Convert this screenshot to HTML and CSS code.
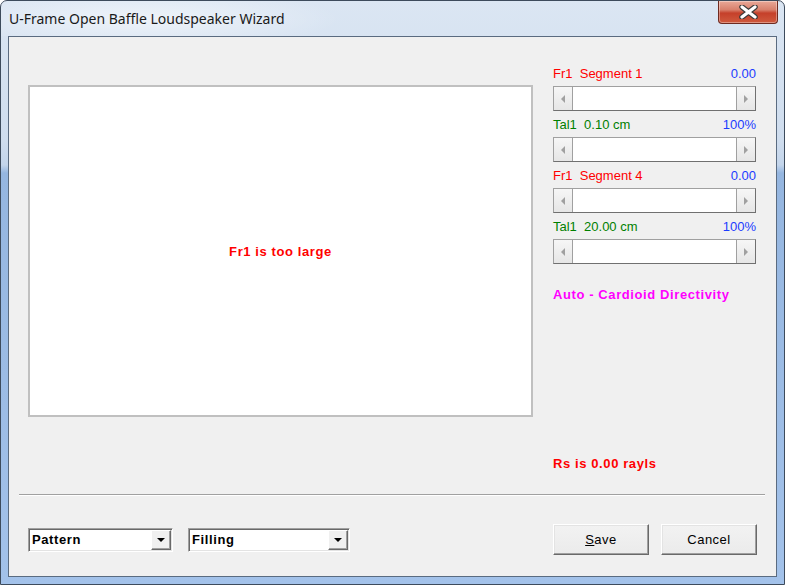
FILE: index.html
```html
<!DOCTYPE html>
<html lang="en">
<head>
    <meta charset="UTF-8">
    <title>U-Frame Open Baffle Loudspeaker Wizard</title>
    <link rel="stylesheet" href="styles.css">
</head>
<body>
    <div class="window">
        <div class="titlebar">
            <span class="title">U-Frame Open Baffle Loudspeaker Wizard</span>
            <div class="close-btn">
                <svg width="19" height="14" viewBox="0 0 19 14">
                    <path d="M3 2 L16 12 M16 2 L3 12" stroke="#3a3a3a" stroke-width="5.5" stroke-linecap="round"/>
                    <path d="M3 2 L16 12 M16 2 L3 12" stroke="#ffffff" stroke-width="3.2" stroke-linecap="round"/>
                </svg>
            </div>
        </div>

        <div class="client">
            <div class="main">
                <!-- plot area -->
                <div class="plot">
                    <span class="plot-msg">Fr1 is too large</span>
                </div>

                <!-- sliders -->
                <div class="panel">
                    <div class="slider-group">
                        <div class="slider-label"><span class="red">Fr1&nbsp; Segment 1</span><span class="blue">0.00</span></div>
                        <div class="scrollbar">
                            <div class="sb-btn left"><i class="arrow-left"></i></div>
                            <div class="sb-track"></div>
                            <div class="sb-btn right"><i class="arrow-right"></i></div>
                        </div>
                    </div>
                    <div class="slider-group">
                        <div class="slider-label"><span class="green">Tal1&nbsp; 0.10 cm</span><span class="blue">100%</span></div>
                        <div class="scrollbar">
                            <div class="sb-btn left"><i class="arrow-left"></i></div>
                            <div class="sb-track"></div>
                            <div class="sb-btn right"><i class="arrow-right"></i></div>
                        </div>
                    </div>
                    <div class="slider-group">
                        <div class="slider-label"><span class="red">Fr1&nbsp; Segment 4</span><span class="blue">0.00</span></div>
                        <div class="scrollbar">
                            <div class="sb-btn left"><i class="arrow-left"></i></div>
                            <div class="sb-track"></div>
                            <div class="sb-btn right"><i class="arrow-right"></i></div>
                        </div>
                    </div>
                    <div class="slider-group">
                        <div class="slider-label"><span class="green">Tal1&nbsp; 20.00 cm</span><span class="blue">100%</span></div>
                        <div class="scrollbar">
                            <div class="sb-btn left"><i class="arrow-left"></i></div>
                            <div class="sb-track"></div>
                            <div class="sb-btn right"><i class="arrow-right"></i></div>
                        </div>
                    </div>

                    <div class="mode">Auto - Cardioid Directivity</div>
                    <div class="rs">Rs is 0.00 rayls</div>
                </div>
            </div>

            <div class="separator"></div>

            <div class="footer">
                <div class="combos">
                    <div class="combo combo-pattern">
                        <span class="combo-text">Pattern</span>
                        <span class="combo-arrow"><i class="arrow-down"></i></span>
                    </div>
                    <div class="combo combo-filling">
                        <span class="combo-text">Filling</span>
                        <span class="combo-arrow"><i class="arrow-down"></i></span>
                    </div>
                </div>
                <div class="buttons">
                    <button class="btn"><u>S</u>ave</button>
                    <button class="btn">Cancel</button>
                </div>
            </div>
        </div>
    </div>
</body>
</html>
```

FILE: styles.css
```css
* {
    box-sizing: border-box;
}

body {
    margin: 0;
    background: #ffffff;
    font-family: "Liberation Sans", Arial, sans-serif;
}

.window {
    width: 785px;
    height: 585px;
    display: flex;
    flex-direction: column;
    padding: 0 7px 7px;
    border: 1px solid #3d4b5c;
    border-radius: 7px 7px 0 0;
    background: linear-gradient(180deg, #dbe6f3 0px, #cfddee 140px, #c3d5eb 164px, #95b6e0 172px, #a3c2ea 100%);
}

.titlebar {
    height: 35px;
    margin: 0 -7px;
    display: flex;
    align-items: flex-start;
    background: radial-gradient(ellipse 200px 30px at 140px 18px, rgba(255, 255, 255, 0.55), rgba(255, 255, 255, 0));
}

.title {
    padding: 8px 0 0 8px;
    line-height: 20px;
    font-family: "Noto Sans", sans-serif;
    font-size: 14px;
    color: #1a1a1a;
}

.close-btn {
    margin-left: auto;
    margin-right: 6px;
    width: 60px;
    height: 23px;
    border: 1px solid #6e2a20;
    border-top: none;
    border-radius: 0 0 4px 4px;
    background: linear-gradient(180deg, #e9a898 0%, #d8806c 40%, #c5402a 55%, #cf5a3e 100%);
    box-shadow: inset 0 0 0 1px rgba(255, 255, 255, 0.35);
    display: flex;
    align-items: center;
    justify-content: center;
}

.client {
    flex: 1;
    display: flex;
    flex-direction: column;
    background: #f0f0f0;
    border: 1px solid #5a6b80;
}

.main {
    height: 457px;
    display: flex;
    align-items: flex-start;
}

.plot {
    width: 505px;
    height: 332px;
    margin: 48px 0 0 19px;
    background: #ffffff;
    border: 2px solid #c0c0c0;
    display: flex;
    align-items: center;
    justify-content: center;
}

.plot-msg {
    color: #ff0000;
    font-weight: bold;
    font-size: 13px;
    letter-spacing: 0.6px;
    margin-top: 1px;
}

.panel {
    width: 203px;
    margin: 29px 0 0 20px;
    display: flex;
    flex-direction: column;
    gap: 6px;
}

.slider-group {
    display: flex;
    flex-direction: column;
    gap: 4px;
}

.slider-label {
    height: 16px;
    line-height: 16px;
    display: flex;
    justify-content: space-between;
    font-size: 13px;
}

.red { color: #ff0000; }
.green { color: #008000; }
.blue { color: #1c3cff; }

.scrollbar {
    height: 25px;
    display: flex;
    border: 1px solid;
    border-color: #a0a0a0 #707070 #707070 #a0a0a0;
    background: #ffffff;
}

.sb-btn {
    width: 19px;
    display: flex;
    align-items: center;
    justify-content: center;
    background: linear-gradient(180deg, #f6f6f6, #e6e6e6);
}

.sb-btn.left {
    border-right: 1px solid #a0a0a0;
}

.sb-btn.right {
    border-left: 1px solid #a0a0a0;
}

.sb-track {
    flex: 1;
}

.arrow-left,
.arrow-right {
    width: 0;
    height: 0;
    border-top: 4px solid transparent;
    border-bottom: 4px solid transparent;
}

.arrow-left {
    border-right: 4px solid #a0a0a0;
}

.arrow-right {
    border-left: 4px solid #a0a0a0;
}

.mode {
    margin-top: 17px;
    line-height: 16px;
    font-size: 13px;
    font-weight: bold;
    letter-spacing: 0.6px;
    color: #ff00ff;
}

.rs {
    margin-top: 147px;
    line-height: 16px;
    font-size: 13px;
    font-weight: bold;
    letter-spacing: 0.6px;
    color: #ff0000;
}

.separator {
    margin-left: 10px;
    width: 746px;
    border-top: 1px solid #a0a0a0;
    border-bottom: 1px solid #ffffff;
}

.footer {
    margin-top: 28px;
    padding: 0 19px;
    display: flex;
    align-items: center;
    justify-content: space-between;
}

.combos {
    display: flex;
    gap: 15px;
}

.combo {
    height: 24px;
    display: flex;
    align-items: stretch;
    background: #ffffff;
    border: 1px solid;
    border-color: #a0a0a0 #ffffff #ffffff #a0a0a0;
    box-shadow: inset 1px 1px 0 #696969, inset -1px -1px 0 #e3e3e3;
    padding: 1px;
}

.combo-pattern {
    width: 145px;
}

.combo-filling {
    width: 162px;
}

.combo-text {
    flex: 1;
    padding-left: 2px;
    line-height: 20px;
    font-size: 13px;
    font-weight: bold;
    letter-spacing: 0.6px;
    color: #000000;
}

.combo-arrow {
    width: 20px;
    display: flex;
    align-items: center;
    justify-content: center;
    background: #f0f0f0;
    border: 1px solid;
    border-color: #ffffff #696969 #696969 #ffffff;
    box-shadow: inset -1px -1px 0 #a0a0a0;
}

.arrow-down {
    width: 0;
    height: 0;
    border-left: 4px solid transparent;
    border-right: 4px solid transparent;
    border-top: 4px solid #000000;
}

.buttons {
    display: flex;
    gap: 12px;
}

.btn {
    width: 96px;
    height: 31px;
    padding: 0;
    background: linear-gradient(180deg, #f2f2f2, #ebebeb);
    border: 1px solid;
    border-color: #ffffff #696969 #696969 #ffffff;
    box-shadow: inset -1px -1px 0 #a0a0a0, inset 1px 1px 0 #e3e3e3;
    font-family: "Liberation Sans", Arial, sans-serif;
    font-size: 13px;
    letter-spacing: 0.5px;
    color: #000000;
}
```
